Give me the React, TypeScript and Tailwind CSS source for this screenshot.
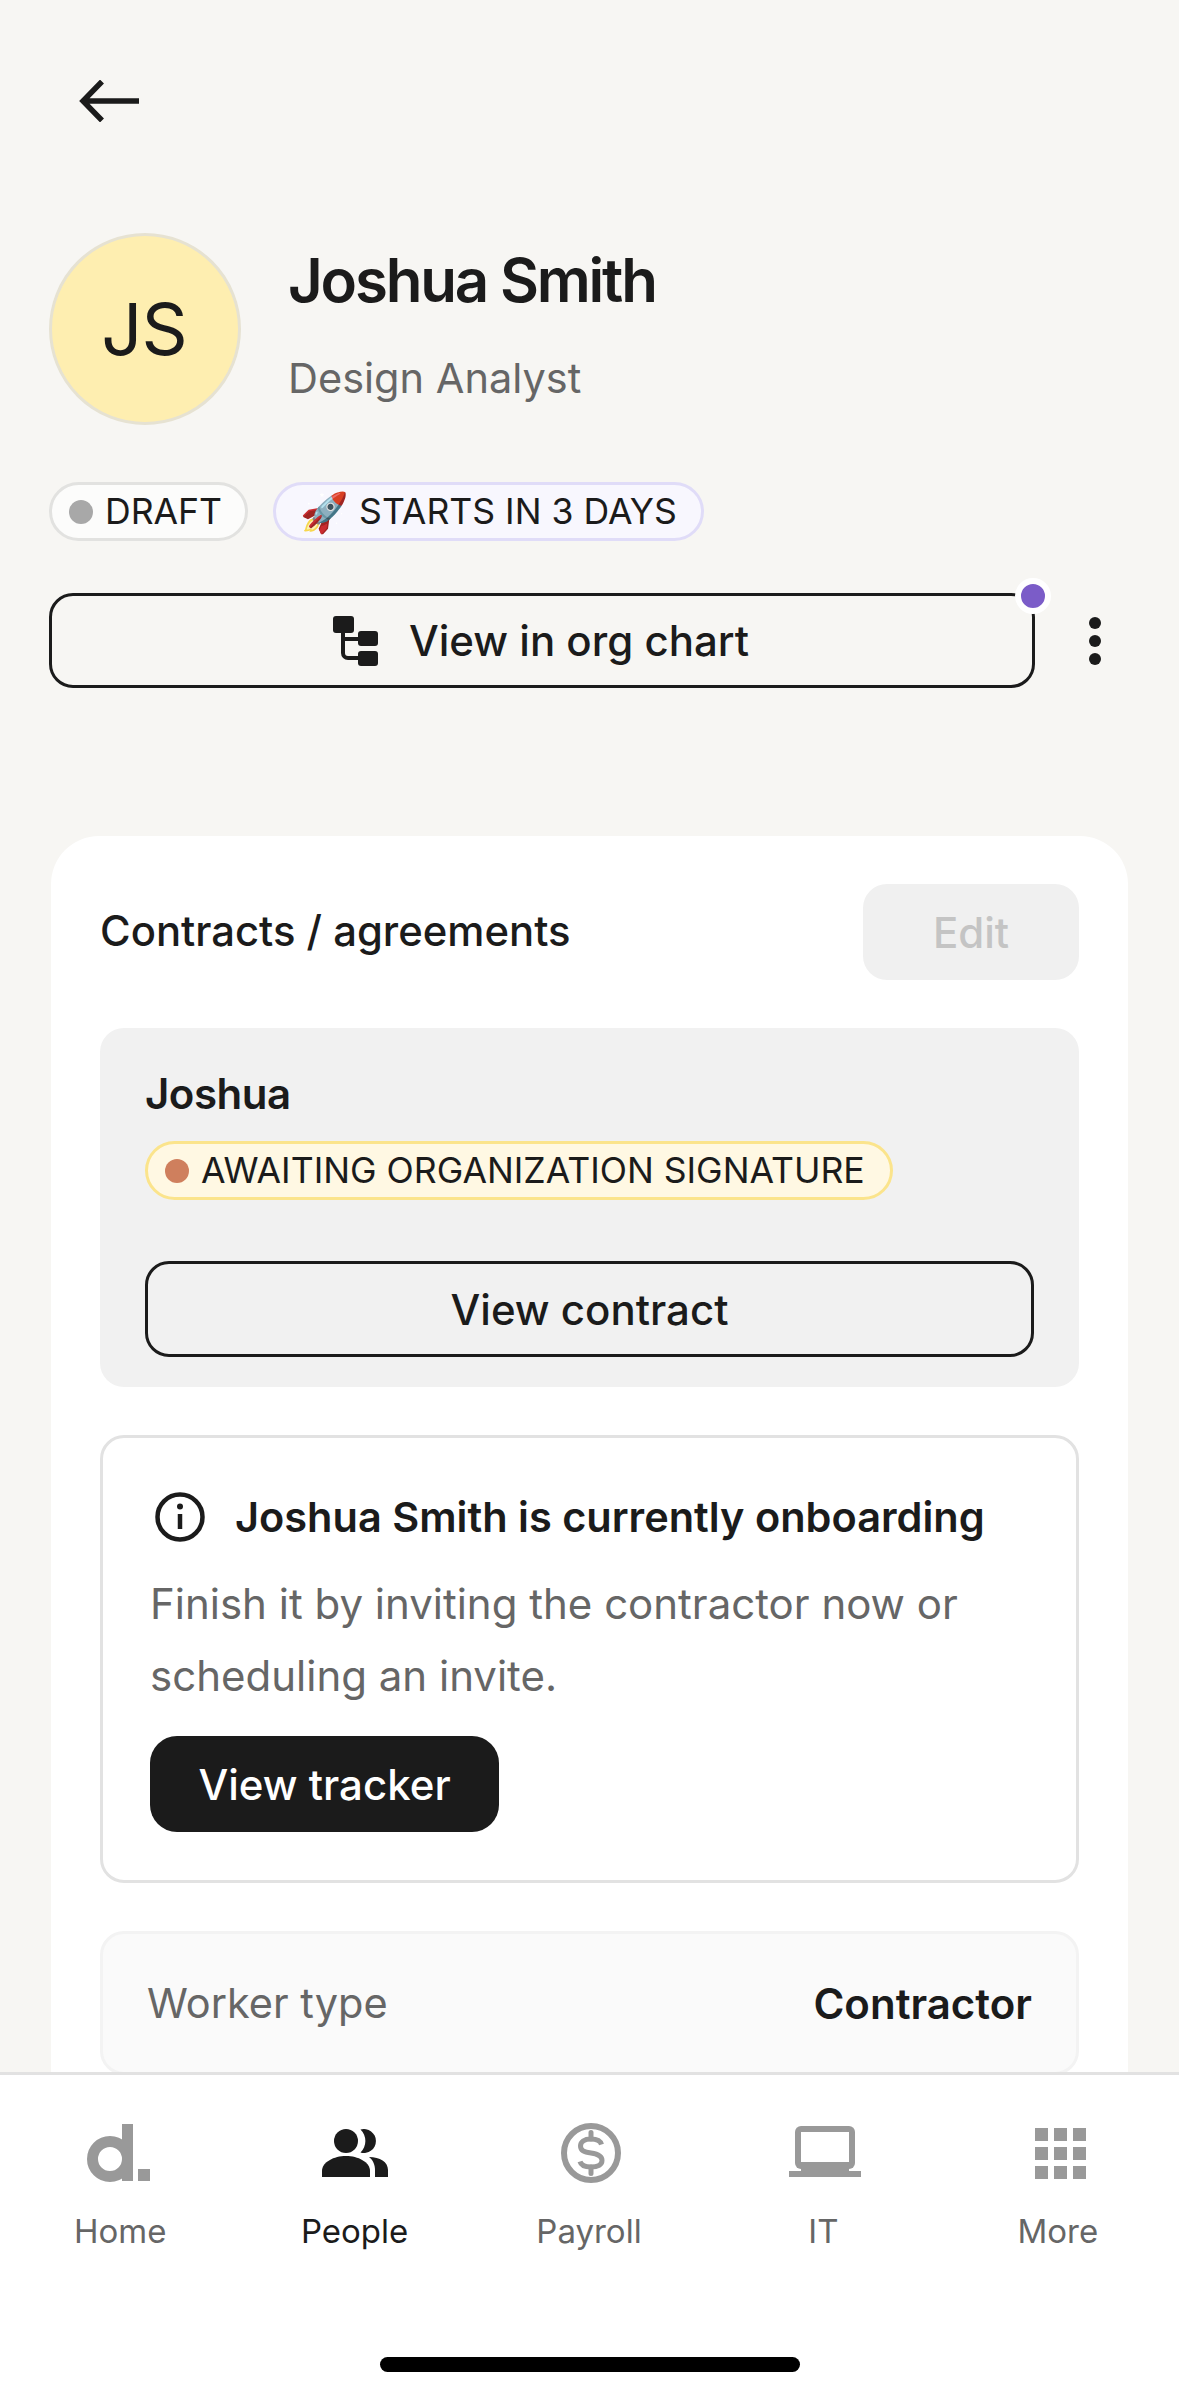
import React from "react";

const font = { fontFamily: "Inter, 'Noto Sans', sans-serif" };

function OrgIcon() {
  return (
    <svg width="46" height="50" viewBox="0 0 46 50" fill="none">
      <rect x="0" y="0" width="21" height="17" rx="3" fill="#1b1b1b" />
      <rect x="25" y="15" width="20" height="15" rx="3" fill="#1b1b1b" />
      <rect x="25" y="35" width="20" height="15" rx="3" fill="#1b1b1b" />
      <path d="M10 15V37a5 5 0 0 0 5 5H26M10 23H26" stroke="#1b1b1b" strokeWidth="4" />
    </svg>
  );
}

function HomeLogo() {
  return (
    <svg width="63" height="58" viewBox="0 0 63 58" fill="none" className="mr-[3px]">
      <circle cx="23" cy="35" r="17.500" stroke="#999999" strokeWidth="11" />
      <rect x="35" y="0" width="11" height="57" fill="#999999" />
      <rect x="51" y="45" width="12" height="12" fill="#999999" />
    </svg>
  );
}

function PeopleIcon() {
  return (
    <svg width="66" height="48" viewBox="0 0 66 48" fill="#1b1b1b">
      <circle cx="24" cy="12" r="12" />
      <path d="M0 48V42C0 33 12 27 24 27C36 27 48 33 48 42V48Z" />
      <path d="M38.500 0.500A12 12 0 1 1 38.500 23.500A16 16 0 0 0 38.500 0.500Z" />
      <path d="M47 28C58 28 66 33 66 41V48H53V41C53 36 51 31 47 28Z" />
    </svg>
  );
}

function PayrollIcon() {
  return (
    <svg width="60" height="60" viewBox="0 0 60 60" fill="none" stroke="#999999" className="ml-[4px]">
      <circle cx="30" cy="30" r="27" strokeWidth="6" />
      <path d="M40.500 21.500C39.500 18 36 16 30 16C23 16 19.500 19 19.500 23C19.500 27.500 23 29 30 30C37 31 41 33 41 37.500C41 41.500 37 44 30 44C24 44 20 42 19 38.500" strokeWidth="5" />
      <path d="M30 9.500V16M30 44V50.500" strokeWidth="5" strokeLinecap="round" />
    </svg>
  );
}

function LaptopIcon() {
  return (
    <svg width="72" height="51" viewBox="0 0 72 51" fill="none" className="ml-[4px] mb-[3px]">
      <rect x="6" y="0" width="60" height="43" rx="6" fill="#999999" />
      <rect x="12" y="6" width="48" height="30" fill="#ffffff" />
      <rect x="12" y="40" width="48" height="6" fill="#999999" />
      <rect x="0" y="45" width="72" height="6" fill="#999999" />
    </svg>
  );
}

function GridIcon() {
  return (
    <svg width="51" height="51" viewBox="0 0 51 51" fill="#999999" className="ml-[6px]">
      {[0, 19, 38].map((y) =>
        [0, 19, 38].map((x) => <rect key={`${x}-${y}`} x={x} y={y} width="13" height="13" />),
      )}
    </svg>
  );
}

function NavItem({ icon, label, active }: { icon: React.ReactNode; label: string; active?: boolean }) {
  return (
    <div className="flex flex-col items-center">
      <div className="flex h-[60px] items-center justify-center">{icon}</div>
      <span className={`mt-[26px] text-[33px] leading-[44px] ${active ? "text-[#1b1b1b]" : "text-[#666666]"}`}>{label}</span>
    </div>
  );
}

export default function App() {
  return (
    <div style={font} className="flex h-[2396px] w-[1179px] flex-col overflow-hidden bg-[#f7f6f3] text-[#1b1b1b]">
      <div className="h-[2072px] shrink-0 overflow-hidden">
        <div className="px-[49px] pt-[80px]">
          <svg width="60" height="42" viewBox="0 0 60 42" fill="none" stroke="#1b1b1b" strokeWidth="5.500" className="ml-[30px]">
            <path d="M60 21H4M23 1.500L4 21L23 40.500" />
          </svg>
          <div className="mt-[111px] flex">
            <div className="flex h-[192px] w-[192px] items-center justify-center rounded-full border-[3px] border-[#e6e2d2] bg-[#feeeb0] pr-[2px] text-[72px] tracking-[-1px]">JS</div>
            <div className="ml-[47px] pt-[11px]">
              <div className="text-[60px] leading-[72px] font-semibold tracking-[-2.200px]">Joshua Smith</div>
              <div className="mt-[34px] text-[41.500px] leading-[56px] text-[#666666]">Design Analyst</div>
            </div>
          </div>
          <div className="mt-[57px] flex gap-[25px]">
            <div className="flex h-[59px] items-center rounded-full border-[3px] border-[#e2e2e0] bg-[#fcfcfb] pl-[17px] pr-[23px] text-[35.600px]">
              <span className="mr-[12px] h-[24px] w-[24px] rounded-full bg-[#a8a8a8]" />
              DRAFT
            </div>
            <div className="flex h-[59px] items-center rounded-full border-[3px] border-[#e0dcf8] bg-[#f8f7fe] pl-[24px] pr-[24px] text-[35.600px]">
              <span className="mr-[10px] text-[39px] leading-none">🚀</span>
              STARTS IN 3 DAYS
            </div>
          </div>
          <div className="mt-[52px] flex items-center">
            <div className="relative flex h-[95px] w-[986px] items-center justify-center gap-[30px] rounded-[24px] border-[3px] border-[#1b1b1b] pr-[2px] text-[42px] font-medium">
              <OrgIcon />
              View in org chart
              <span className="absolute right-[-19px] top-[-18px] h-[36px] w-[36px] rounded-full border-[6px] border-white bg-[#7b5cc8]" />
            </div>
            <div className="ml-[54px] flex flex-col gap-[6px]">
              <span className="h-[12px] w-[12px] rounded-full bg-[#1b1b1b]" />
              <span className="h-[12px] w-[12px] rounded-full bg-[#1b1b1b]" />
              <span className="h-[12px] w-[12px] rounded-full bg-[#1b1b1b]" />
            </div>
          </div>
        </div>
        <div className="mx-[51px] mt-[148px] rounded-t-[48px] bg-white px-[49px] pt-[48px] pb-[60px]">
          <div className="flex items-center justify-between">
            <div className="pb-[2px] text-[41.800px] font-medium">Contracts / agreements</div>
            <div className="flex h-[96px] w-[216px] items-center justify-center rounded-[24px] bg-[#f0f0f0] text-[42px] font-medium text-[#c4c4c4]">Edit</div>
          </div>
          <div className="mt-[48px] rounded-[24px] bg-[#f1f1f1] px-[45px] pt-[40px] pb-[30px]">
            <div className="text-[42px] leading-[52px] font-semibold tracking-[-0.5px]">Joshua</div>
            <div className="mt-[21px] flex h-[59px] w-fit items-center rounded-full border-[3px] border-[#fbe48c] bg-[#fff8e3] pl-[17px] pr-[25px] text-[35.600px]">
              <span className="mr-[12px] h-[24px] w-[24px] rounded-full bg-[#cf7f5d]" />
              AWAITING ORGANIZATION SIGNATURE
            </div>
            <div className="mt-[61px] flex h-[96px] items-center justify-center rounded-[24px] border-[3px] border-[#1b1b1b] text-[42px] font-medium">View contract</div>
          </div>
          <div className="mt-[48px] rounded-[24px] border-[3px] border-[#e2e2e2] px-[47px] pt-[53px] pb-[48px]">
            <div className="flex items-center">
              <svg width="50" height="50" viewBox="0 0 50 50" fill="none" stroke="#1b1b1b" className="ml-[5px]">
                <circle cx="25" cy="25" r="22.500" strokeWidth="4.500" />
                <path d="M25 22V37" strokeWidth="4.500" />
                <circle cx="25" cy="14.500" r="3" fill="#1b1b1b" stroke="none" />
              </svg>
              <div className="ml-[30px] text-[41.500px] leading-[52px] font-semibold">Joshua Smith is currently onboarding</div>
            </div>
            <div className="mt-[25px] text-[42px] leading-[72px] text-[#666666]">Finish it by inviting the contractor now or scheduling an invite.</div>
            <div className="mt-[24px] flex h-[96px] w-[349px] items-center justify-center rounded-[27px] bg-[#1b1b1b] text-[42px] font-medium text-white">View tracker</div>
          </div>
          <div className="mt-[48px] flex h-[144px] items-center justify-between rounded-[24px] border-[3px] border-[#f3f3f3] bg-[#fafafa] px-[44px]">
            <span className="text-[41.500px] text-[#666666]">Worker type</span>
            <span className="text-[42px] font-semibold">Contractor</span>
          </div>
        </div>
      </div>
      <div className="flex-1 border-t-[3px] border-[#e2e2e2] bg-white">
        <div className="grid grid-cols-5 pl-[3px] pr-[4px] pt-[48px]">
          <NavItem icon={<HomeLogo />} label="Home" />
          <NavItem icon={<PeopleIcon />} label="People" active />
          <NavItem icon={<PayrollIcon />} label="Payroll" />
          <NavItem icon={<LaptopIcon />} label="IT" />
          <NavItem icon={<GridIcon />} label="More" />
        </div>
        <div className="mx-auto mt-[104px] h-[15px] w-[420px] rounded-full bg-black" />
      </div>
    </div>
  );
}
